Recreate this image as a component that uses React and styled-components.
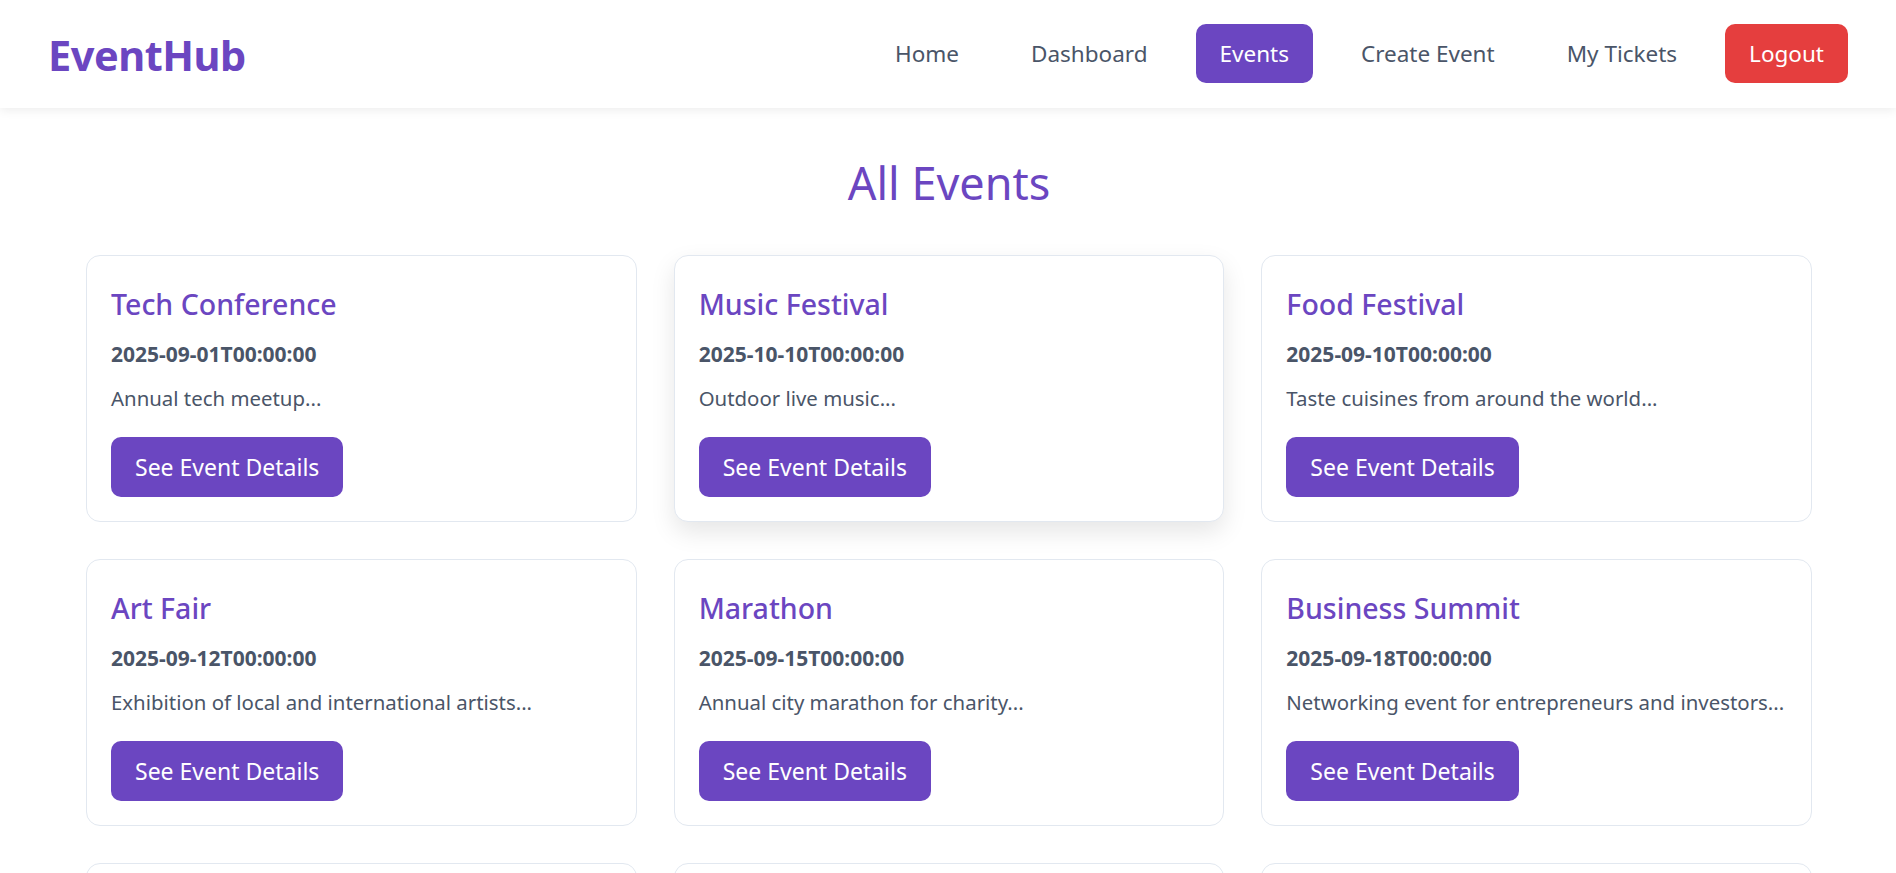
import React from 'react';
import styled, { createGlobalStyle, css } from 'styled-components';

const GlobalStyle = createGlobalStyle`
    * {
        box-sizing: border-box;
    }
    body {
        margin: 0;
        background: #ffffff;
        font-family: "Noto Sans", "Open Sans", sans-serif;
        color: #2d3748;
    }
`;

const Header = styled.header`
    height: 108px;
    padding: 0 48px;
    display: flex;
    align-items: center;
    justify-content: space-between;
    background: #ffffff;
    box-shadow: 0 2px 10px rgba(0, 0, 0, 0.08);
`;

const Logo = styled.div`
    font-size: 41.5px;
    font-weight: 700;
    color: #6b46c1;
    letter-spacing: -0.5px;
    margin-top: 2px;
`;

const Nav = styled.nav`
    display: flex;
    align-items: center;
    gap: 24px;
    margin-top: -2px;
`;

const NavLink = styled.a`
    font-size: 22.5px;
    line-height: 31px;
    padding: 14px 24px;
    border-radius: 10px;
    color: #4a5568;
    text-decoration: none;
    cursor: pointer;

    ${(p) => p.active && css`
        background: #6b46c1;
        color: #ffffff;
    `}

    ${(p) => p.danger && css`
        background: #e53e3e;
        color: #ffffff;
    `}
`;

const Main = styled.main`
    padding: 0 84px 0 86px;
`;

const Title = styled.h1`
    margin: 46px 0 43px;
    text-align: center;
    font-size: 45px;
    line-height: 58px;
    font-weight: 400;
    color: #6b46c1;
`;

const Grid = styled.div`
    display: grid;
    grid-template-columns: repeat(3, 1fr);
    gap: 37px;
`;

const Card = styled.div`
    height: 267px;
    padding: 31px 24px 23px;
    border: 1px solid #e2e8f0;
    border-radius: 14px;
    background: #ffffff;
    display: flex;
    flex-direction: column;
    align-items: flex-start;
    ${(p) => p.hovered && css`
        box-shadow: 0 10px 25px rgba(0, 0, 0, 0.1);
    `}
`;

const CardTitle = styled.h3`
    margin: 0;
    font-size: 28.5px;
    line-height: 34px;
    font-weight: 500;
    color: #6b46c1;
`;

const CardDate = styled.p`
    margin: 21px 0 0;
    font-size: 21px;
    line-height: 24px;
    font-weight: 700;
    color: #4a5568;
`;

const CardDesc = styled.p`
    margin: 20px 0 0;
    font-size: 20.4px;
    line-height: 24px;
    color: #4a5568;
`;

const DetailsButton = styled.button`
    margin-top: 27px;
    height: 60px;
    padding: 0 24px;
    border: none;
    border-radius: 10px;
    background: #6b46c1;
    color: #ffffff;
    font-family: inherit;
    font-size: 23px;
    cursor: pointer;
`;

const events = [
    { title: 'Tech Conference', date: '2025-09-01T00:00:00', desc: 'Annual tech meetup...' },
    { title: 'Music Festival', date: '2025-10-10T00:00:00', desc: 'Outdoor live music...', hovered: true },
    { title: 'Food Festival', date: '2025-09-10T00:00:00', desc: 'Taste cuisines from around the world...' },
    { title: 'Art Fair', date: '2025-09-12T00:00:00', desc: 'Exhibition of local and international artists...' },
    { title: 'Marathon', date: '2025-09-15T00:00:00', desc: 'Annual city marathon for charity...' },
    { title: 'Business Summit', date: '2025-09-18T00:00:00', desc: 'Networking event for entrepreneurs and investors...' },
    { title: 'Film Screening', date: '2025-09-20T00:00:00', desc: 'Open-air screening of classic films...' },
    { title: 'Charity Gala', date: '2025-09-25T00:00:00', desc: 'Evening of dinner and fundraising...' },
    { title: 'Book Fair', date: '2025-09-28T00:00:00', desc: 'Meet authors and discover new books...' },
];

function App() {
    return (
        <>
            <GlobalStyle />
            <Header>
                <Logo>EventHub</Logo>
                <Nav>
                    <NavLink>Home</NavLink>
                    <NavLink>Dashboard</NavLink>
                    <NavLink active>Events</NavLink>
                    <NavLink>Create Event</NavLink>
                    <NavLink>My Tickets</NavLink>
                    <NavLink danger>Logout</NavLink>
                </Nav>
            </Header>
            <Main>
                <Title>All Events</Title>
                <Grid>
                    {events.map((ev) => (
                        <Card key={ev.title} hovered={ev.hovered}>
                            <CardTitle>{ev.title}</CardTitle>
                            <CardDate>{ev.date}</CardDate>
                            <CardDesc>{ev.desc}</CardDesc>
                            <DetailsButton>See Event Details</DetailsButton>
                        </Card>
                    ))}
                </Grid>
            </Main>
        </>
    );
}

export default App;
